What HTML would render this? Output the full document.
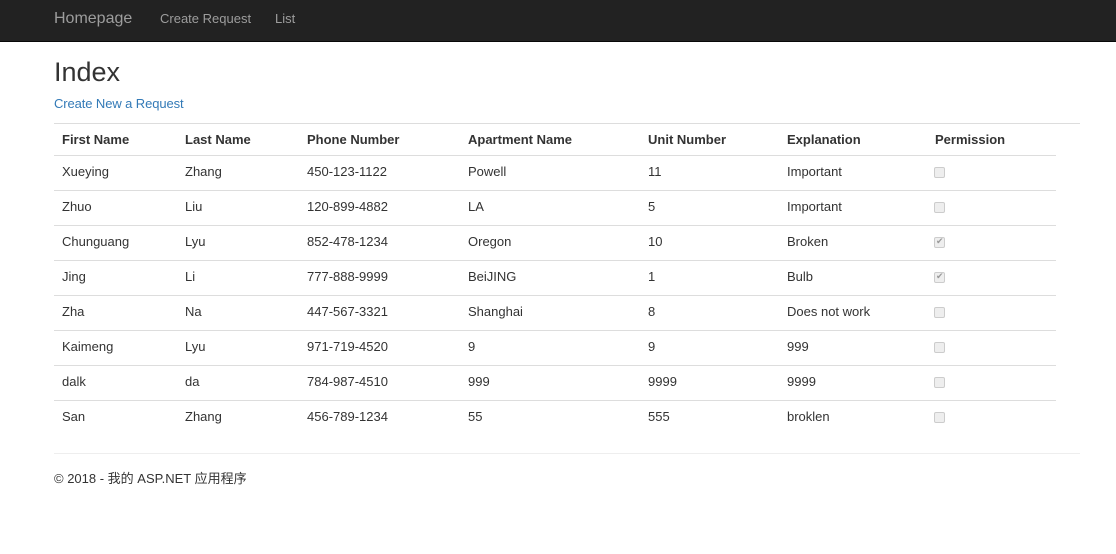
<!DOCTYPE html>
<html><head><meta charset="utf-8"><style>
body{margin:0;font-family:"Liberation Sans","Noto Sans CJK SC",sans-serif;font-size:13px;color:#333;background:#fff;width:1116px;height:554px;overflow:hidden;position:relative}
.nav{height:41px;background:#222;border-bottom:1px solid #080808;position:relative}
.nav span{position:absolute;color:#9d9d9d}
h2{position:absolute;left:54px;top:55px;margin:0;font-size:27px;font-weight:500;line-height:34px}
a.c{position:absolute;left:54px;top:96px;color:#337ab7;text-decoration:none;line-height:16px;letter-spacing:-0.1px}
.top{position:absolute;left:54px;top:123px;width:1026px;border-top:1px solid #ddd}
table{position:absolute;left:54px;top:124px;width:1002px;border-collapse:collapse}
td,th{padding:0 0 0 8px;text-align:left;border-bottom:1px solid #ddd;vertical-align:middle;white-space:nowrap}
td{padding-bottom:3px;height:31px}
th{height:30px;font-weight:bold;padding-bottom:0}
.cb{display:inline-block;width:9px;height:9px;border:1px solid #ccc;border-radius:2px;background:#eee;position:relative;top:2px;left:-1px}
.cb.k:after{content:"✔";position:absolute;left:1px;top:-2px;font-size:9px;color:#999}
hr{position:absolute;left:54px;top:453px;width:1026px;margin:0;border:0;border-top:1px solid #eee}
.f{position:absolute;left:54px;top:471px;line-height:16px}
</style></head><body>
<div class="nav"><span style="left:54px;top:10px;font-size:16px">Homepage</span><span style="left:160px;top:11px">Create Request</span><span style="left:275px;top:11px">List</span></div>
<h2>Index</h2>
<a class="c">Create New a Request</a>
<div class="top"></div>
<table>
<colgroup><col style="width:123px"><col style="width:122px"><col style="width:161px"><col style="width:180px"><col style="width:139px"><col style="width:148px"><col></colgroup>
<tr><th style="height:31px">First Name</th><th>Last Name</th><th>Phone Number</th><th>Apartment Name</th><th>Unit Number</th><th>Explanation</th><th>Permission</th></tr>
<tr><td>Xueying</td><td>Zhang</td><td>450-123-1122</td><td>Powell</td><td>11</td><td>Important</td><td><span class="cb"></span></td></tr>
<tr><td>Zhuo</td><td>Liu</td><td>120-899-4882</td><td>LA</td><td>5</td><td>Important</td><td><span class="cb"></span></td></tr>
<tr><td>Chunguang</td><td>Lyu</td><td>852-478-1234</td><td>Oregon</td><td>10</td><td>Broken</td><td><span class="cb k"></span></td></tr>
<tr><td>Jing</td><td>Li</td><td>777-888-9999</td><td>BeiJING</td><td>1</td><td>Bulb</td><td><span class="cb k"></span></td></tr>
<tr><td>Zha</td><td>Na</td><td>447-567-3321</td><td>Shanghai</td><td>8</td><td>Does not work</td><td><span class="cb"></span></td></tr>
<tr><td>Kaimeng</td><td>Lyu</td><td>971-719-4520</td><td>9</td><td>9</td><td>999</td><td><span class="cb"></span></td></tr>
<tr><td>dalk</td><td>da</td><td>784-987-4510</td><td>999</td><td>9999</td><td>9999</td><td><span class="cb"></span></td></tr>
<tr><td style="border:0">San</td><td style="border:0">Zhang</td><td style="border:0">456-789-1234</td><td style="border:0">55</td><td style="border:0">555</td><td style="border:0">broklen</td><td style="border:0"><span class="cb"></span></td></tr>
</table>
<hr>
<div class="f">© 2018 - 我的 ASP.NET 应用程序</div>
</body></html>
